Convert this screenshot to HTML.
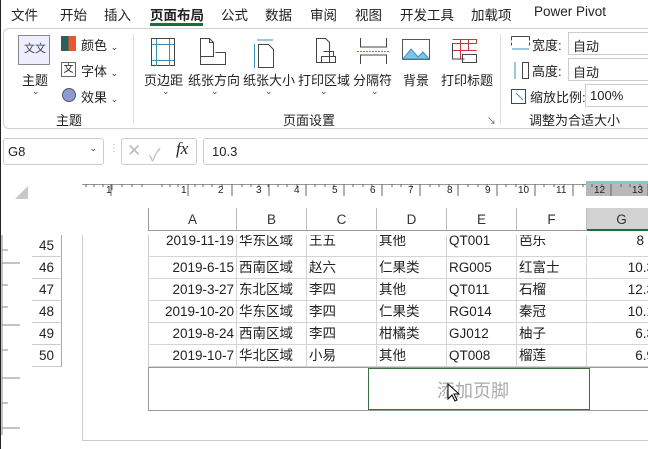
<!DOCTYPE html>
<html><head><meta charset="utf-8"><style>
*{margin:0;padding:0;box-sizing:border-box}
body{width:648px;height:449px;overflow:hidden;background:#fff;font-family:"Liberation Sans","Noto Sans CJK SC",sans-serif;font-size:13px;color:#222;position:relative}
.a{position:absolute;white-space:nowrap}
.tab{top:4px;font-size:13.5px}
.sm{font-size:12px}
.cell{position:absolute;height:22px;line-height:22px;font-size:13.5px;border-right:1px solid #d4d4d4;border-bottom:1px solid #d4d4d4;padding:0 2px;overflow:hidden}
.hd{position:absolute;top:208px;height:23px;line-height:23px;text-align:center;font-size:13.5px;border-right:1px solid #bbb;border-bottom:1px solid #999;color:#333}
.rn{position:absolute;left:32px;width:30px;height:22px;line-height:22px;text-align:center;font-size:13.5px;border-right:1px solid #aaa;border-bottom:1px solid #ccc}
.chev{font-size:9px;color:#444}
</style></head><body>
<div class="a" style="left:0;top:0;width:1px;height:449px;background:#222"></div>
<div class="a tab" style="left:11px">文件</div>
<div class="a tab" style="left:60px">开始</div>
<div class="a tab" style="left:104px">插入</div>
<div class="a tab" style="left:150px;font-weight:bold">页面布局</div>
<div class="a" style="left:150px;top:23px;width:53px;height:3px;background:#1e6b3c"></div>
<div class="a tab" style="left:221px">公式</div>
<div class="a tab" style="left:265px">数据</div>
<div class="a tab" style="left:310px">审阅</div>
<div class="a tab" style="left:355px">视图</div>
<div class="a tab" style="left:400px">开发工具</div>
<div class="a tab" style="left:471px">加载项</div>
<div class="a tab" style="left:534px">Power Pivot</div>
<div class="a" style="left:3px;top:28px;width:660px;height:101px;border:1px solid #d0d0d0;border-radius:6px;background:#fff"></div>
<div class="a" style="left:133px;top:34px;width:1px;height:90px;background:#ddd"></div>
<div class="a" style="left:500px;top:34px;width:1px;height:90px;background:#ddd"></div>
<div class="a" style="left:18px;top:35px;width:32px;height:30px;border:1px solid #888;background:#eef"></div>
<div class="a" style="left:24px;top:40px;font-size:11px;color:#345">文文</div>
<div class="a" style="left:22px;top:70px">主题</div>
<div class="a chev" style="left:32px;top:86px">⌄</div>
<div class="a" style="left:61px;top:36px;width:15px;height:15px;background:linear-gradient(90deg,#2d5f5a 50%,#e8582f 50%)"></div>
<div class="a" style="left:81px;top:35px">颜色 <span class="chev">⌄</span></div>
<div class="a" style="left:61px;top:62px;width:15px;height:15px;border:1px solid #666;font-size:10px;text-align:center;line-height:13px">文</div>
<div class="a" style="left:81px;top:61px">字体 <span class="chev">⌄</span></div>
<div class="a" style="left:62px;top:88px;width:14px;height:14px;border-radius:50%;background:#8f9ad2;border:1px solid #556"></div>
<div class="a" style="left:81px;top:87px">效果 <span class="chev">⌄</span></div>
<div class="a" style="left:56px;top:110px">主题</div>
<svg class="a" style="left:148px;top:36px" width="340" height="36" fill="none" stroke="#444" stroke-width="1">
<rect x="3.5" y="2.5" width="23" height="27"/><path d="M8.5 3v27M21.5 3v27M4 8.5h22M4 24.5h22" stroke="#3a8fb7"/>
<path d="M52.5 2.5h9l4 4v14h-13zM52.5 20.5v8h25v-12h-10" /><path d="M61.5 2.5v4h4"/>
<path d="M110.5 8.5h10l5 5v18h-15z"/><path d="M106.5 8v24M109 4h16" stroke="#3a8fb7"/>
<path d="M168.5 2.5h9l4 4v20h-13zM173.5 20.5h14v6h-14zM175.5 15.5h10v5"/>
<path d="M212.5 2v9h26v-9M212.5 28v-9h26v9"/><path d="M209 15.5h33" stroke="#3a8fb7" stroke-dasharray="2 1"/>
<rect x="254.5" y="3.5" width="27" height="20" stroke="#555"/><path d="M255 23l8-10 7 8 5-5 6 7z" fill="#7fc3e6" stroke="#3a8fb7"/>
<path d="M304.5 7.5h24M304.5 14.5h24M312.5 3v20M320.5 3v12M304.5 3.5h24v4" stroke="#d0303a"/><path d="M304.5 7v16h12M314.5 18.5h14v8h-14z"/>
</svg>
<div class="a" style="left:144px;top:70px">页边距</div>
<div class="a" style="left:188px;top:70px">纸张方向</div>
<div class="a" style="left:243px;top:70px">纸张大小</div>
<div class="a" style="left:298px;top:70px">打印区域</div>
<div class="a" style="left:353px;top:70px">分隔符</div>
<div class="a" style="left:403px;top:70px">背景</div>
<div class="a" style="left:441px;top:70px">打印标题</div>
<div class="a chev" style="left:162px;top:86px">⌄</div>
<div class="a chev" style="left:211px;top:86px">⌄</div>
<div class="a chev" style="left:265px;top:86px">⌄</div>
<div class="a chev" style="left:320px;top:86px">⌄</div>
<div class="a chev" style="left:371px;top:86px">⌄</div>
<div class="a" style="left:283px;top:110px">页面设置</div>
<div class="a" style="left:487px;top:114px;font-size:9px;color:#555">↘</div>
<svg class="a" style="left:510px;top:35px" width="22" height="70" fill="none" stroke="#444">
<path d="M1.5 1.5h18M1.5 1.5v4M19.5 1.5v4M1.5 10.5v-3M19.5 10.5v-3" /><path d="M2 14h17" stroke="#3a8fb7"/>
<path d="M12.5 27.5h6v16h-6z"/><path d="M5 27v17" stroke="#3a8fb7"/>
<rect x="1.5" y="54.5" width="14" height="14"/><path d="M6 58l7 7" stroke="#3a8fb7"/>
</svg>
<div class="a" style="left:532px;top:35px">宽度:</div>
<div class="a" style="left:532px;top:61px">高度:</div>
<div class="a" style="left:530px;top:87px">缩放比例:</div>
<div class="a" style="left:568px;top:32px;width:90px;height:23px;border:1px solid #ccc;padding:3px 4px">自动</div>
<div class="a" style="left:568px;top:58px;width:90px;height:23px;border:1px solid #ccc;padding:3px 4px">自动</div>
<div class="a" style="left:585px;top:84px;width:70px;height:23px;border:1px solid #ccc;padding:3px 4px">100%</div>
<div class="a" style="left:529px;top:110px">调整为合适大小</div>
<div class="a" style="left:3px;top:138px;width:101px;height:27px;border:1px solid #ccc;border-radius:3px;padding:5px 4px">G8<span style="position:absolute;right:6px;top:4px" class="chev">⌄</span></div>
<div class="a" style="left:109px;top:143px;color:#aaa;font-size:10px">⋮</div>
<div class="a" style="left:121px;top:138px;width:76px;height:27px;border:1px solid #ccc;border-radius:3px"></div>
<div class="a" style="left:127px;top:141px;color:#bbb;font-size:17px">✕</div>
<div class="a" style="left:149px;top:141px;color:#bbb;font-size:17px">✓</div>
<div class="a" style="left:176px;top:139px;font-family:'Liberation Serif',serif;font-style:italic;font-size:17px">fx</div>
<div class="a" style="left:203px;top:138px;width:460px;height:27px;border:1px solid #ccc;border-radius:3px;padding:5px 8px">10.3</div>
<div class="a" style="left:15px;top:186px;width:0;height:0;border-left:13px solid transparent;border-bottom:13px solid #c8c8c8"></div>
<div class="a" style="left:82px;top:184px;width:570px;height:1px;background:#999"></div>
<div class="a" style="left:586px;top:181px;width:70px;height:15px;background:#b8b8b8"></div>
<div class="a" style="left:586px;top:181px;width:70px;height:3px;background:#8cc7c7"></div>
<svg class="a" style="left:82px;top:184px" width="570" height="14" stroke="#666">
<path d="M4 0v3M12 0v3M21 0v3M30 0v6M40 0v3M50 0v3M60 0v3M80 0v3M88 0v3M96 0v3M113 0v3M121 0v3M130 0v3M140 0v3M150 0v3M160 0v3M169 0v3M177 0v3M186 0v3M196 0v3M205 0v3M215 0v3M224 0v3M233 0v3M243 0v3M252 0v3M262 0v3M271 0v3M281 0v3M290 0v3M300 0v3M310 0v3M319 0v3M329 0v3M338 0v3M348 0v3M357 0v3M367 0v3M376 0v3M386 0v3M396 0v3M405 0v3M415 0v3M424 0v3M434 0v3M443 0v3M453 0v3M462 0v3M472 0v3M482 0v3M491 0v3M501 0v3M510 0v3M520 0v3M529 0v3M539 0v3M548 0v3M558 0v3"/>
<path d="M29 0v12M106 0v12M150 0v12M187 0v12M224 0v12M262 0v12M300 0v12M338 0v12M376 0v12M415 0v12M453 0v12M491 0v12M529 0v12M566 0v12"/>
</svg>
<div class="a" style="top:185px;left:106px;font-size:10px">1</div>
<div class="a" style="top:185px;font-size:10px;left:181px">1</div>
<div class="a" style="top:185px;font-size:10px;left:218px">2</div>
<div class="a" style="top:185px;font-size:10px;left:256px">3</div>
<div class="a" style="top:185px;font-size:10px;left:294px">4</div>
<div class="a" style="top:185px;font-size:10px;left:332px">5</div>
<div class="a" style="top:185px;font-size:10px;left:370px">6</div>
<div class="a" style="top:185px;font-size:10px;left:408px">7</div>
<div class="a" style="top:185px;font-size:10px;left:447px">8</div>
<div class="a" style="top:185px;font-size:10px;left:485px">9</div>
<div class="a" style="top:185px;font-size:10px;left:518px">10</div>
<div class="a" style="top:185px;font-size:10px;left:556px">11</div>
<div class="a" style="top:185px;font-size:10px;left:594px">12</div>
<div class="a" style="top:185px;font-size:10px;left:632px">13</div>
<div class="hd" style="left:148px;width:89px;border-left:1px solid #999">A</div>
<div class="hd" style="left:237px;width:70px">B</div>
<div class="hd" style="left:307px;width:70px">C</div>
<div class="hd" style="left:377px;width:70px">D</div>
<div class="hd" style="left:447px;width:70px">E</div>
<div class="hd" style="left:517px;width:70px">F</div>
<div class="hd" style="left:587px;width:70px;background:#d2d2d2;border-bottom:2px solid #1e6b3c">G</div>
<svg class="a" style="left:0;top:235px" width="24" height="200" stroke="#888">
<path d="M2 0v200M2 15h6M2 28h18M2 50h6M2 72h6M2 90h18M2 115h6M2 143h18M2 168h6M2 193h18"/>
</svg>
<div class="a" style="left:82px;top:235px;width:1px;height:205px;background:#ccc"></div>
<div class="a" style="left:82px;top:440px;width:570px;height:1px;background:#ccc"></div>
<div class="rn" style="top:235px">45</div>
<div class="rn" style="top:257px">46</div>
<div class="rn" style="top:279px">47</div>
<div class="rn" style="top:301px">48</div>
<div class="rn" style="top:323px">49</div>
<div class="rn" style="top:345px">50</div>
<div class="cell" style="left:148px;top:235px;width:89px;text-align:right;border-left:1px solid #ccc;line-height:12px">2019-11-19</div><div class="cell" style="left:237px;top:235px;width:70px;line-height:12px">华东区域</div><div class="cell" style="left:307px;top:235px;width:70px;line-height:12px">王五</div><div class="cell" style="left:377px;top:235px;width:70px;line-height:12px">其他</div><div class="cell" style="left:447px;top:235px;width:70px;line-height:12px">QT001</div><div class="cell" style="left:517px;top:235px;width:70px;line-height:12px">芭乐</div><div class="cell" style="left:587px;top:235px;width:70px;text-align:right;line-height:12px;padding-right:12px">8</div>
<div class="cell" style="left:148px;top:257px;width:89px;text-align:right;border-left:1px solid #ccc">2019-6-15</div><div class="cell" style="left:237px;top:257px;width:70px">西南区域</div><div class="cell" style="left:307px;top:257px;width:70px">赵六</div><div class="cell" style="left:377px;top:257px;width:70px">仁果类</div><div class="cell" style="left:447px;top:257px;width:70px">RG005</div><div class="cell" style="left:517px;top:257px;width:70px">红富士</div><div class="cell" style="left:587px;top:257px;width:70px;text-align:right;padding-right:2px">10.3</div>
<div class="cell" style="left:148px;top:279px;width:89px;text-align:right;border-left:1px solid #ccc">2019-3-27</div><div class="cell" style="left:237px;top:279px;width:70px">东北区域</div><div class="cell" style="left:307px;top:279px;width:70px">李四</div><div class="cell" style="left:377px;top:279px;width:70px">其他</div><div class="cell" style="left:447px;top:279px;width:70px">QT011</div><div class="cell" style="left:517px;top:279px;width:70px">石榴</div><div class="cell" style="left:587px;top:279px;width:70px;text-align:right;padding-right:2px">12.3</div>
<div class="cell" style="left:148px;top:301px;width:89px;text-align:right;border-left:1px solid #ccc">2019-10-20</div><div class="cell" style="left:237px;top:301px;width:70px">华东区域</div><div class="cell" style="left:307px;top:301px;width:70px">李四</div><div class="cell" style="left:377px;top:301px;width:70px">仁果类</div><div class="cell" style="left:447px;top:301px;width:70px">RG014</div><div class="cell" style="left:517px;top:301px;width:70px">秦冠</div><div class="cell" style="left:587px;top:301px;width:70px;text-align:right;padding-right:2px">10.1</div>
<div class="cell" style="left:148px;top:323px;width:89px;text-align:right;border-left:1px solid #ccc">2019-8-24</div><div class="cell" style="left:237px;top:323px;width:70px">西南区域</div><div class="cell" style="left:307px;top:323px;width:70px">李四</div><div class="cell" style="left:377px;top:323px;width:70px">柑橘类</div><div class="cell" style="left:447px;top:323px;width:70px">GJ012</div><div class="cell" style="left:517px;top:323px;width:70px">柚子</div><div class="cell" style="left:587px;top:323px;width:70px;text-align:right;padding-right:2px">6.3</div>
<div class="cell" style="left:148px;top:345px;width:89px;text-align:right;border-left:1px solid #ccc">2019-10-7</div><div class="cell" style="left:237px;top:345px;width:70px">华北区域</div><div class="cell" style="left:307px;top:345px;width:70px">小易</div><div class="cell" style="left:377px;top:345px;width:70px">其他</div><div class="cell" style="left:447px;top:345px;width:70px">QT008</div><div class="cell" style="left:517px;top:345px;width:70px">榴莲</div><div class="cell" style="left:587px;top:345px;width:70px;text-align:right;padding-right:2px">6.9</div>
<div class="a" style="left:148px;top:367px;width:510px;height:44px;border:1px solid #999;border-right:none"></div>
<div class="a" style="left:368px;top:368px;width:222px;height:42px;border:1px solid #3c6e47"></div>
<div class="a" style="left:437px;top:377px;font-size:18px;color:#aaa">添加页脚</div>
<svg class="a" style="left:447px;top:383px" width="14" height="20"><path d="M1 1v15l4-4 3 6 2-1-3-6h5z" fill="#fff" stroke="#000"/></svg>
</body></html>
